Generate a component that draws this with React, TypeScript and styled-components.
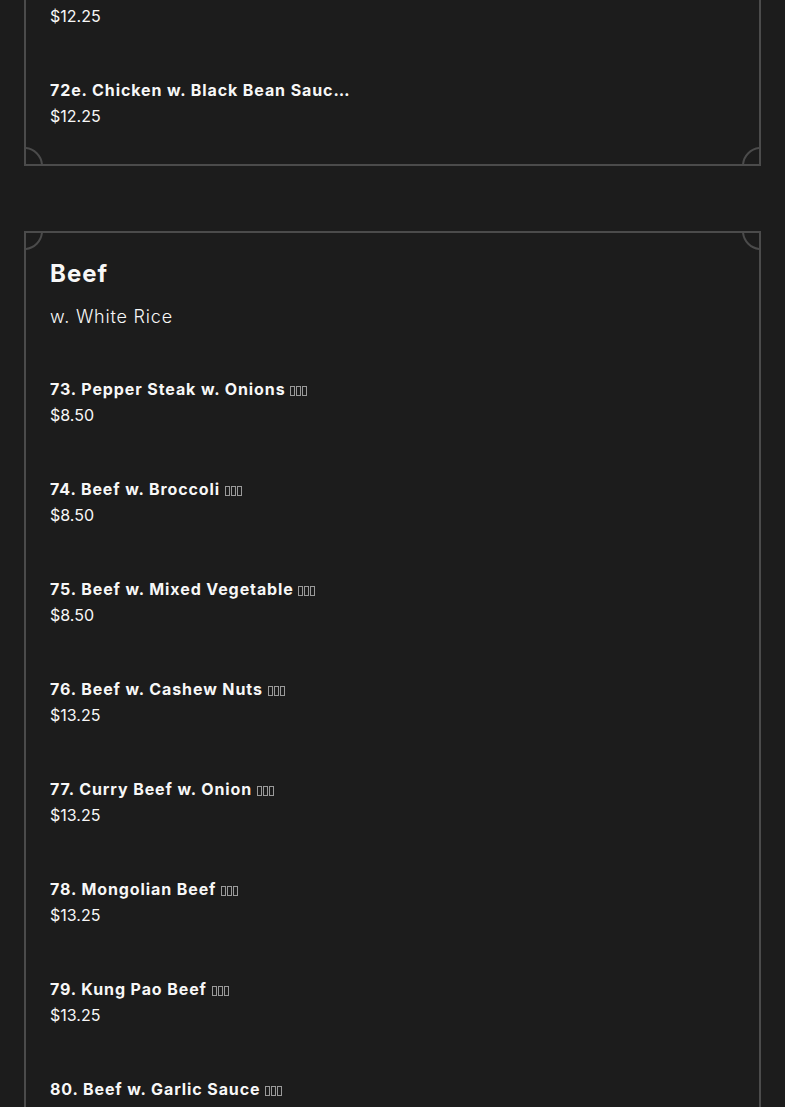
import styled, { createGlobalStyle } from "styled-components";

type Item = { name: string; price: string; tofu?: boolean };
type Section = { title: string; subtitle: string; items: Item[] };

const sections: Section[] = [
  {
    title: "Chicken",
    subtitle: "w. White Rice",
    items: [
      { name: "72d. Chicken w. Garlic Sauce", price: "$12.25", tofu: true },
      { name: "72e. Chicken w. Black Bean Sauce", price: "$12.25", tofu: true },
    ],
  },
  {
    title: "Beef",
    subtitle: "w. White Rice",
    items: [
      { name: "73. Pepper Steak w. Onions", price: "$8.50", tofu: true },
      { name: "74. Beef w. Broccoli", price: "$8.50", tofu: true },
      { name: "75. Beef w. Mixed Vegetable", price: "$8.50", tofu: true },
      { name: "76. Beef w. Cashew Nuts", price: "$13.25", tofu: true },
      { name: "77. Curry Beef w. Onion", price: "$13.25", tofu: true },
      { name: "78. Mongolian Beef", price: "$13.25", tofu: true },
      { name: "79. Kung Pao Beef", price: "$13.25", tofu: true },
      { name: "80. Beef w. Garlic Sauce", price: "$13.25", tofu: true },
    ],
  },
];

export default function App() {
  return (
    <>
      <GlobalStyle />
      <StyledPage>
        {sections.map((section) => (
          <StyledCard key={section.title}>
            <StyledCorner $v="top" $h="left" />
            <StyledCorner $v="top" $h="right" />
            <StyledCorner $v="bottom" $h="left" />
            <StyledCorner $v="bottom" $h="right" />
            <StyledTitle>{section.title}</StyledTitle>
            <StyledSubtitle>{section.subtitle}</StyledSubtitle>
            <StyledList>
              {section.items.map((item) => (
                <StyledItem key={item.name}>
                  <StyledName>
                    {item.name}{" "}
                    {item.tofu && (
                      <StyledTofu>
                        <i />
                        <i />
                        <i />
                      </StyledTofu>
                    )}
                  </StyledName>
                  <StyledPrice>{item.price}</StyledPrice>
                </StyledItem>
              ))}
            </StyledList>
          </StyledCard>
        ))}
      </StyledPage>
    </>
  );
}

const GlobalStyle = createGlobalStyle`
  html, body {
    margin: 0;
    background: #1c1c1c;
    color: #f7f7f7;
    font-family: Inter, "Noto Sans", sans-serif;
  }
`;

const StyledPage = styled.main`
  margin-top: -168px;
  padding: 0 24px;
  display: flex;
  flex-direction: column;
  gap: 65px;
`;

const StyledCard = styled.section`
  position: relative;
  overflow: hidden;
  border: 2px solid #4b4b4b;
  padding: 24px 24px 35px;
`;

const StyledCorner = styled.span<{ $v: "top" | "bottom"; $h: "left" | "right" }>`
  position: absolute;
  ${(p) => p.$v}: -21px;
  ${(p) => p.$h}: -21px;
  width: 38px;
  height: 38px;
  box-sizing: border-box;
  border: 2px solid #4b4b4b;
  border-radius: 50%;
  background: #1c1c1c;
`;

const StyledTitle = styled.h2`
  margin: 0;
  font-size: 24px;
  line-height: 34px;
  font-weight: 700;
  letter-spacing: 1px;
`;

const StyledSubtitle = styled.p`
  margin: 12px 0 0;
  font-size: 18px;
  line-height: 28px;
  font-weight: 300;
  letter-spacing: 0.8px;
`;

const StyledList = styled.div`
  display: flex;
  flex-direction: column;
  gap: 48px;
  margin-top: 45px;
`;

const StyledItem = styled.div`
  display: flex;
  flex-direction: column;
`;

const StyledName = styled.div`
  max-width: 300px;
  font-size: 16px;
  line-height: 26px;
  font-weight: 700;
  letter-spacing: 0.9px;
  white-space: nowrap;
  overflow: hidden;
  text-overflow: ellipsis;
`;

const StyledPrice = styled.div`
  font-size: 16px;
  line-height: 26px;
  font-weight: 400;
`;

const StyledTofu = styled.span`
  display: inline-flex;
  gap: 1px;
  vertical-align: -1px;

  i {
    display: block;
    width: 5px;
    height: 10px;
    box-sizing: border-box;
    border: 1px solid #9a9a9a;
  }
`;
